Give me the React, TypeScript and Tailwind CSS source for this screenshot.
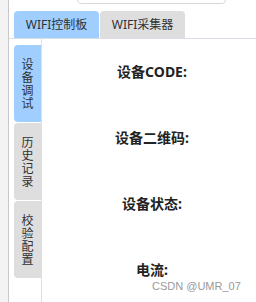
const topTabs = [
  { label: "WIFI控制板", active: true },
  { label: "WIFI采集器", active: false },
];

const sideTabs = [
  { label: "设备调试", active: true },
  { label: "历史记录", active: false },
  { label: "校验配置", active: false },
];

const fields = ["设备CODE:", "设备二维码:", "设备状态:", "电流:"];

export default function App() {
  return (
    <div
      className="relative flex h-[302px] w-[256px] overflow-hidden bg-white text-[#303133]"
      style={{ fontFamily: '"Noto Sans", "Noto Sans CJK SC", sans-serif' }}
    >
      <div className="w-[9px] shrink-0 border-r border-[#c8c8c8] bg-[#f3f3f3]" />

      <div className="flex min-w-0 flex-1 flex-col">
        {/* bottom edge of a box scrolled above */}
        <div className="-mt-[21px] ml-[68px] h-[25px] w-[149px] shrink-0 rounded-[4px] border border-[#d6d8de]" />

        <div className="mt-[7px] flex h-[28px] shrink-0 gap-[1px] border-b border-[#dcdfe6] pl-[5px]">
          {topTabs.map((tab) => (
            <div
              key={tab.label}
              className={`flex h-[27px] w-[85px] items-center justify-center rounded-t-[4px] text-[12px] ${
                tab.active ? "bg-[#a0cfff]" : "bg-[#dedede]"
              }`}
            >
              {tab.label}
            </div>
          ))}
        </div>

        <div className="flex min-h-0 flex-1">
          <div className="flex w-[33px] shrink-0 flex-col gap-[1px] border-r border-[#dcdfe6] pl-[5px] pt-[6px]">
            {sideTabs.map((tab) => (
              <div
                key={tab.label}
                className={`flex h-[77px] flex-col items-center justify-center rounded-l-[4px] text-[12px] leading-[13px] ${
                  tab.active ? "bg-[#a0cfff]" : "bg-[#dedede]"
                }`}
              >
                {tab.label.split("").map((ch, i) => (
                  <span key={i} className="block h-[13px]">
                    {ch}
                  </span>
                ))}
              </div>
            ))}
          </div>

          <div className="flex flex-1 flex-col items-center gap-[46px] pl-[6px] pt-[23px]">
            {fields.map((f) => (
              <div key={f} className="text-[14px] font-bold leading-[20px] text-[#222]">
                {f}
              </div>
            ))}
          </div>
        </div>
      </div>

      <div
        className="absolute left-[152px] top-[279px] text-[11px] leading-[14px] text-[#9a9a9a]"
        style={{ fontFamily: '"Liberation Sans", sans-serif' }}
      >
        CSDN @UMR_07
      </div>
    </div>
  );
}
